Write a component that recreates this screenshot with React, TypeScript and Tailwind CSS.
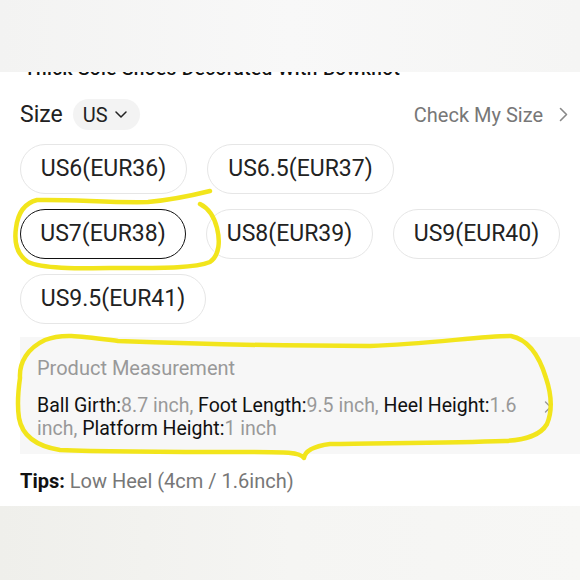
import React from "react";

const sizes = [
  { label: "US6(EUR36)", w: "w-[167px]", sel: false },
  { label: "US6.5(EUR37)", w: "w-[187px]", sel: false },
  { label: "US7(EUR38)", w: "w-[166px]", sel: true },
  { label: "US8(EUR39)", w: "w-[167px]", sel: false },
  { label: "US9(EUR40)", w: "w-[167px]", sel: false },
  { label: "US9.5(EUR41)", w: "w-[186px]", sel: false },
];

export default function App() {
  return (
    <div className="relative w-[580px] h-[580px] overflow-hidden bg-white font-['Roboto',sans-serif] text-[#222]">
      <div className="h-[72px] bg-gradient-to-r from-[#f3f3f2] via-[#f8f8f8] to-[#f5f5f4]" />
      <div className="h-[4px] overflow-hidden pl-[24px]">
        <div className="-translate-y-[13px] text-[19px] leading-[19px] font-medium tracking-[0.4px] whitespace-nowrap text-[#111]">
          Thick Sole Shoes Decorated With Bowknot
        </div>
      </div>

      <div className="mt-[23px] flex items-center justify-between pl-[20px] pr-[12px] h-[31px]">
        <div className="flex items-center gap-[10px]">
          <span className="text-[23px] leading-[28px]">Size</span>
          <div className="flex items-center gap-[7px] h-[31px] pl-[10px] pr-[13px] rounded-full bg-[#f3f3f3]">
            <span className="text-[20px] leading-[24px]">US</span>
            <svg width="12" height="7" viewBox="0 0 12 7" fill="none">
              <path d="M1 1l5 5 5-5" stroke="#222" strokeWidth="1.5" strokeLinecap="round" strokeLinejoin="round" />
            </svg>
          </div>
        </div>
        <div className="flex items-center gap-[16px]">
          <span className="text-[20px] leading-[28px] text-[#777]">Check My Size</span>
          <svg width="9" height="15" viewBox="0 0 9 15" fill="none">
            <path d="M1.5 1.5l6 6-6 6" stroke="#888" strokeWidth="1.6" strokeLinecap="round" strokeLinejoin="round" />
          </svg>
        </div>
      </div>

      <div className="mt-[14px] flex flex-wrap gap-x-[20px] gap-y-[15px] pl-[20px] pr-[12px]">
        {sizes.map((s) => (
          <div
            key={s.label}
            className={
              s.sel
                ? `${s.w} h-[50px] flex items-center justify-center rounded-full border-[1.5px] border-[#111] text-[23px]`
                : `${s.w} h-[50px] flex items-center justify-center rounded-full border-[1.5px] border-[#e6e6e6] text-[23px]`
            }
          >
            {s.label}
          </div>
        ))}
      </div>

      <div className="mt-[13px] ml-[20px] bg-[#f7f7f7] pl-[17px] pr-[28px] pt-[19px] pb-[14px]">
        <div className="text-[20px] leading-[24px] text-[#999]">Product Measurement</div>
        <div className="mt-[14px] flex items-center gap-[10px]">
          <p className="flex-1 text-[19.5px] leading-[23px] text-[#111]">
            Ball Girth:<span className="text-[#999]">8.7 inch,</span> Foot Length:<span className="text-[#999]">9.5 inch,</span> Heel Height:<span className="text-[#999]">1.6 inch,</span> Platform Height:<span className="text-[#999]">1 inch</span>
          </p>
          <svg width="8" height="12" viewBox="0 0 8 12" fill="none" className="-mt-[20px]">
            <path d="M1.5 1l5 5-5 5" stroke="#999" strokeWidth="1.4" strokeLinecap="round" strokeLinejoin="round" />
          </svg>
        </div>
      </div>

      <div className="mt-[15px] pl-[20px] text-[20px] leading-[24px] text-[#777]">
        <span className="font-bold text-[#111]">Tips:</span> Low Heel (4cm / 1.6inch)
      </div>

      <div className="absolute left-0 right-0 bottom-0 h-[74px] bg-gradient-to-r from-[#efefeb] via-[#f5f5f3] to-[#f7f7f5]" />

      <svg className="absolute inset-0 pointer-events-none" width="580" height="580" viewBox="0 0 580 580" fill="none">
        <path
          d="M210 191 C 190 196, 170 200, 148 202 C 110 203, 70 199, 37 200 C 25 203, 18 212, 16 228 C 14 242, 16 254, 28 262 C 45 270, 90 268, 130 268 C 165 268, 195 268, 210 262 C 220 255, 220 240, 217 228 C 214 216, 208 208, 200 204"
          stroke="#f2e51c"
          strokeWidth="4.5"
          strokeLinecap="round"
          strokeLinejoin="round"
        />
        <path
          d="M20 378 C 19 362, 28 348, 45 340 C 62 333, 80 336, 118 341 C 200 344, 300 346, 370 346 C 430 344, 480 336, 511 336 C 530 340, 540 358, 546 378 C 552 396, 552 412, 547 424 C 540 436, 525 440, 505 441 C 450 443, 380 443, 330 444 C 315 446, 305 450, 304 458 C 300 452, 285 452, 250 452 C 180 452, 110 452, 60 450 C 35 446, 22 435, 19 418 C 17 405, 18 392, 20 378"
          stroke="#f2e51c"
          strokeWidth="4.5"
          strokeLinecap="round"
          strokeLinejoin="round"
        />
      </svg>
    </div>
  );
}
